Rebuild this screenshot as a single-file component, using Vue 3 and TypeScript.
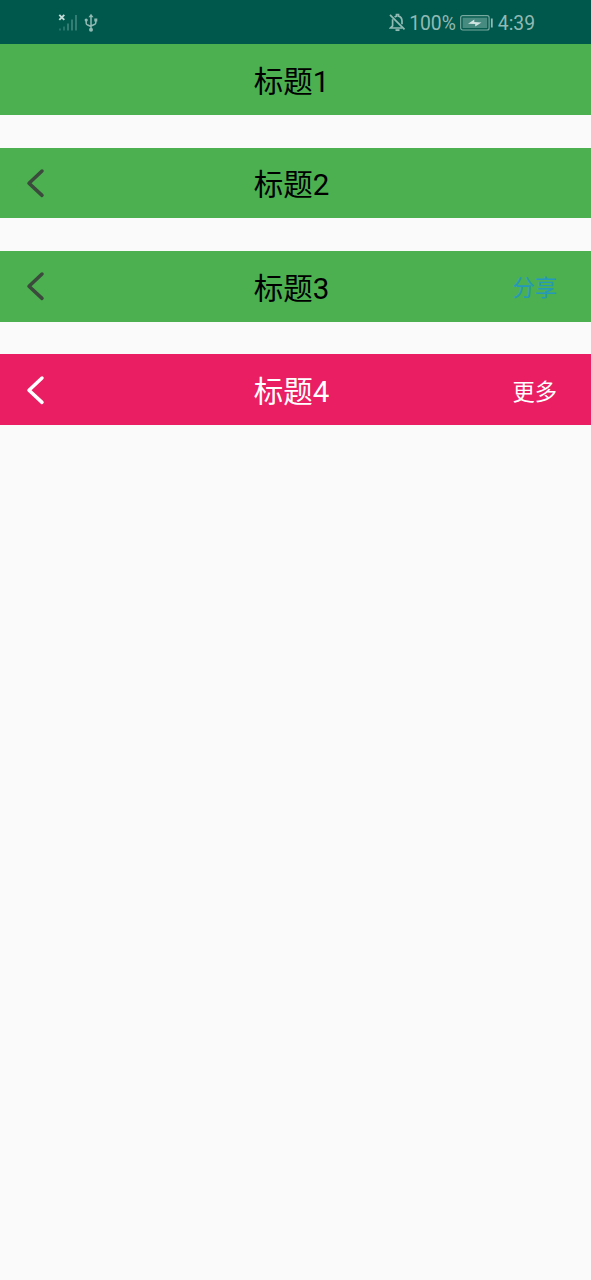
<script setup lang="ts">
interface TitleBar {
  title: string
  back: boolean
  action?: string
  tone: 'plain' | 'pink'
}

const bars: TitleBar[] = [
  { title: '标题1', back: false, tone: 'plain' },
  { title: '标题2', back: true, tone: 'plain' },
  { title: '标题3', back: true, action: '分享', tone: 'plain' },
  { title: '标题4', back: true, action: '更多', tone: 'pink' },
]
</script>

<template>
  <div class="screen">
    <header class="status">
      <svg class="signal" width="20" height="20" viewBox="0 0 20 20">
        <path d="M1.3 1.8l5 5M6.3 1.8l-5 5" stroke="#c4dcd8" stroke-width="1.9" />
        <path d="M2 15.5v2M6 13.5v4" stroke="#25756a" stroke-width="2" />
        <path d="M10 10.5v7M14 6.500v11M18 2v15.500" stroke="#347d72" stroke-width="2" />
      </svg>
      <svg class="usb" width="14" height="20" viewBox="0 0 14 20" fill="none" stroke="#91bab4" stroke-width="1.5">
        <path d="M7 3v14M2.200 7v3.200q0 1.300 1.500 1.800L7 13.500M11.800 7v2.700q0 1.300-1.500 1.800L7 13" />
        <path d="M7 .8l2.500 3.500h-5z" fill="#91bab4" stroke="none" />
        <circle cx="2.200" cy="7" r="1.600" fill="#91bab4" stroke="none" />
        <path d="M10.300 5.500h3v3h-3z" fill="#91bab4" stroke="none" />
        <circle cx="7" cy="16.700" r="2" fill="#91bab4" stroke="none" />
      </svg>
      <span class="spacer"></span>
      <svg class="bell" width="17" height="20" viewBox="0 0 17 20" fill="none" stroke="#91bab4" stroke-width="1.700">
        <path d="M5.700 4.300Q6.500 3.400 7.500 3.100V1.500h2v1.600q3.500 1 3.500 5v3.200M3.600 6.300v6.500L1.500 15h11.800" />
        <path d="M1 1.800L15.500 16.300" />
        <path d="M6.500 17.100h4" stroke-width="1.900" />
      </svg>
      <span class="percent">100%</span>
      <svg class="battery" width="33" height="16" viewBox="0 0 33 16">
        <rect x=".7" y=".7" width="28.400" height="14.300" rx="2" fill="none" stroke="#78a9a1" stroke-width="1.200" />
        <rect x="2.600" y="2.600" width="24.600" height="10.500" fill="#468a80" />
        <path d="M8 8.700L14.300 4.500v2.600l7.200.3-6.300 4.200V9z" fill="#d0e4e1" />
        <path d="M31.800 3.500v9" stroke="#91bab4" stroke-width="1.800" />
      </svg>
      <span class="clock">4:39</span>
    </header>
    <main class="bars">
      <section v-for="bar in bars" :key="bar.title" class="bar" :class="bar.tone">
        <div class="left">
          <svg v-if="bar.back" width="20" height="30" viewBox="0 0 20 30" fill="none" stroke="currentColor">
            <path d="M17 3L4 15.200L17 27.400" stroke-width="3.500" stroke-linecap="round" stroke-linejoin="round" />
          </svg>
        </div>
        <h1 class="title">{{ bar.title }}</h1>
        <div class="action">{{ bar.action }}</div>
      </section>
    </main>
  </div>
</template>

<style>
body {
  margin: 0;
  background: #fafafa;
}
</style>

<style scoped>
.screen {
  height: 1280px;
  overflow: hidden;
  background: #fafafa;
  font-family: Roboto, "Noto Sans CJK SC", sans-serif;
}
.status {
  box-sizing: border-box;
  height: 44px;
  padding: 2px 56px 0 58px;
  display: flex;
  align-items: center;
  background: #00574b;
  color: #91bab4;
  font-size: 19.3px;
  line-height: 24px;
}
.usb {
  margin-left: 6px;
}
.spacer {
  flex: 1;
}
.percent {
  margin-left: 3px;
  padding-top: 2px;
}
.battery {
  margin-left: 4px;
}
.clock {
  margin-left: 5px;
  padding-top: 2px;
}
.bars {
  display: grid;
  grid-auto-rows: 70.6px;
  row-gap: 32.8px;
  padding-top: 0.2px;
}
.bar {
  display: grid;
  grid-template-columns: 120px 1fr 120px;
  align-items: center;
  background: #4caf50;
  color: #000;
}
.bar.pink {
  background: #e91e63;
  color: #fff;
}
.left {
  display: flex;
  padding-left: 25px;
  color: #3b4a3c;
}
.pink .left {
  color: #fff;
}
.title {
  margin: 0;
  padding: 5px 8px 0 0;
  text-align: center;
  font-size: 29.5px;
  font-weight: 400;
  line-height: 36px;
}
.action {
  padding: 4px 34px 0 0;
  text-align: right;
  font-size: 22.3px;
  line-height: 30px;
  color: #2598bd;
}
.pink .action {
  color: #fff;
}
</style>
